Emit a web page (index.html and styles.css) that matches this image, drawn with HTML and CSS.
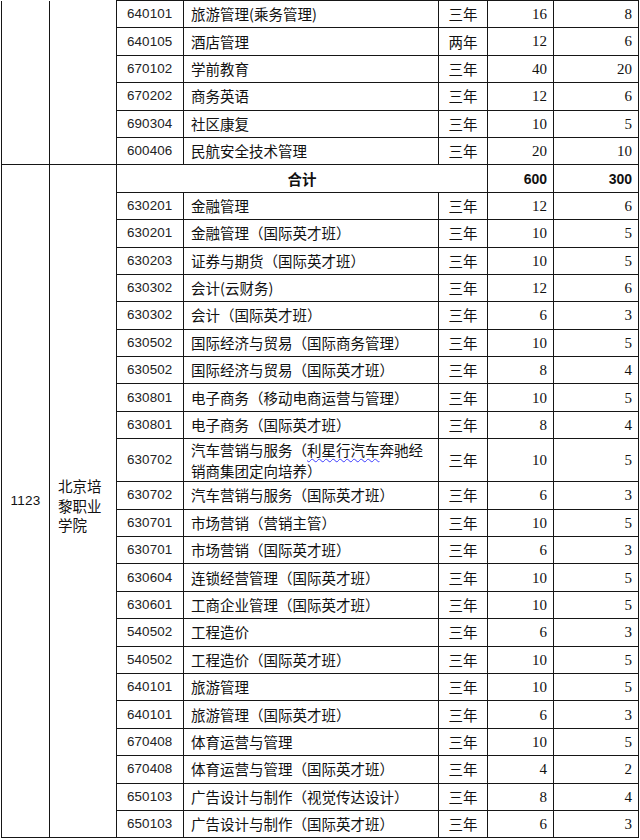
FILE: index.html
```html
<!DOCTYPE html>
<html lang="zh-CN">
<head>
<meta charset="utf-8">
<title>招生计划</title>
<link rel="stylesheet" href="styles.css">
</head>
<body>
<table class="plan">
  <colgroup>
    <col class="c-id"><col class="c-school"><col class="c-code"><col class="c-name"><col class="c-len"><col class="c-num"><col class="c-num2">
  </colgroup>
  <tbody>
    <tr>
      <td class="cont" rowspan="6"></td>
      <td class="cont" rowspan="6"></td>
      <td class="code">640101</td><td class="name">旅游管理(乘务管理)</td><td class="len">三年</td><td class="num hi">16</td><td class="num hi">8</td>
    </tr>
    <tr><td class="code">640105</td><td class="name">酒店管理</td><td class="len">两年</td><td class="num hi">12</td><td class="num hi">6</td></tr>
    <tr><td class="code">670102</td><td class="name">学前教育</td><td class="len">三年</td><td class="num hi">40</td><td class="num hi">20</td></tr>
    <tr><td class="code">670202</td><td class="name">商务英语</td><td class="len">三年</td><td class="num hi">12</td><td class="num hi">6</td></tr>
    <tr><td class="code">690304</td><td class="name">社区康复</td><td class="len">三年</td><td class="num hi">10</td><td class="num hi">5</td></tr>
    <tr><td class="code">600406</td><td class="name">民航安全技术管理</td><td class="len">三年</td><td class="num hi">20</td><td class="num hi">10</td></tr>

    <tr>
      <td class="id" rowspan="24">1123</td>
      <td class="school" rowspan="24">北京培黎职业学院</td>
      <td class="total-label" colspan="3">合计</td><td class="total">600</td><td class="total">300</td>
    </tr>
    <tr><td class="code">630201</td><td class="name">金融管理</td><td class="len">三年</td><td class="num">12</td><td class="num">6</td></tr>
    <tr><td class="code">630201</td><td class="name">金融管理（国际英才班）</td><td class="len">三年</td><td class="num">10</td><td class="num">5</td></tr>
    <tr><td class="code">630203</td><td class="name">证券与期货（国际英才班）</td><td class="len">三年</td><td class="num">10</td><td class="num">5</td></tr>
    <tr><td class="code">630302</td><td class="name">会计(云财务)</td><td class="len">三年</td><td class="num">12</td><td class="num">6</td></tr>
    <tr><td class="code">630302</td><td class="name">会计（国际英才班）</td><td class="len">三年</td><td class="num">6</td><td class="num">3</td></tr>
    <tr><td class="code">630502</td><td class="name">国际经济与贸易（国际商务管理）</td><td class="len">三年</td><td class="num">10</td><td class="num">5</td></tr>
    <tr><td class="code">630502</td><td class="name">国际经济与贸易（国际英才班）</td><td class="len">三年</td><td class="num">8</td><td class="num">4</td></tr>
    <tr><td class="code">630801</td><td class="name">电子商务（移动电商运营与管理）</td><td class="len">三年</td><td class="num">10</td><td class="num">5</td></tr>
    <tr><td class="code">630801</td><td class="name">电子商务（国际英才班）</td><td class="len">三年</td><td class="num">8</td><td class="num">4</td></tr>
    <tr class="tall"><td class="code">630702</td><td class="name wrap">汽车营销与服务（<span class="spell">利星行汽车</span>奔驰经<br>销商集团定向培养）</td><td class="len">三年</td><td class="num">10</td><td class="num">5</td></tr>
    <tr><td class="code">630702</td><td class="name">汽车营销与服务（国际英才班）</td><td class="len">三年</td><td class="num">6</td><td class="num">3</td></tr>
    <tr><td class="code">630701</td><td class="name">市场营销（营销主管）</td><td class="len">三年</td><td class="num">10</td><td class="num">5</td></tr>
    <tr><td class="code">630701</td><td class="name">市场营销（国际英才班）</td><td class="len">三年</td><td class="num">6</td><td class="num">3</td></tr>
    <tr><td class="code">630604</td><td class="name">连锁经营管理（国际英才班）</td><td class="len">三年</td><td class="num">10</td><td class="num">5</td></tr>
    <tr><td class="code">630601</td><td class="name">工商企业管理（国际英才班）</td><td class="len">三年</td><td class="num">10</td><td class="num">5</td></tr>
    <tr><td class="code">540502</td><td class="name">工程造价</td><td class="len">三年</td><td class="num">6</td><td class="num">3</td></tr>
    <tr><td class="code">540502</td><td class="name">工程造价（国际英才班）</td><td class="len">三年</td><td class="num">10</td><td class="num">5</td></tr>
    <tr><td class="code">640101</td><td class="name">旅游管理</td><td class="len">三年</td><td class="num">10</td><td class="num">5</td></tr>
    <tr><td class="code">640101</td><td class="name">旅游管理（国际英才班）</td><td class="len">三年</td><td class="num">6</td><td class="num">3</td></tr>
    <tr><td class="code">670408</td><td class="name">体育运营与管理</td><td class="len">三年</td><td class="num">10</td><td class="num">5</td></tr>
    <tr><td class="code">670408</td><td class="name">体育运营与管理（国际英才班）</td><td class="len">三年</td><td class="num">4</td><td class="num">2</td></tr>
    <tr><td class="code">650103</td><td class="name">广告设计与制作（视觉传达设计）</td><td class="len">三年</td><td class="num">8</td><td class="num">4</td></tr>
    <tr><td class="code">650103</td><td class="name">广告设计与制作（国际英才班）</td><td class="len">三年</td><td class="num">6</td><td class="num">3</td></tr>
  </tbody>
</table>
</body>
</html>
```

FILE: styles.css
```css
html, body {
  margin: 0;
  padding: 0;
  background: #ffffff;
}

body {
  padding-left: 1px;
  color: #111111;
  font-family: "Noto Sans CJK SC", "Liberation Sans", sans-serif;
  font-size: 14.5px;
}

.plan {
  border-collapse: collapse;
  table-layout: fixed;
  width: 637px;
}

.c-id { width: 48px; }
.c-school { width: 67px; }
.c-code { width: 67px; }
.c-name { width: 255px; }
.c-len { width: 49px; }
.c-num { width: 66px; }
.c-num2 { width: 85px; }

.plan tr {
  height: 27.4px;
}

.plan tr.tall {
  height: 42px;
}

.plan td {
  border: 1px solid #161616;
  padding: 0;
  vertical-align: middle;
  line-height: 18px;
  white-space: nowrap;
  overflow: hidden;
}

.plan td.cont {
  border-top: none;
}

.id {
  text-align: center;
  font-family: "Liberation Sans", "DejaVu Sans", sans-serif;
  font-size: 13.5px;
  font-weight: 400;
  letter-spacing: 0.2px;
}

.plan td.school {
  white-space: normal;
  padding: 8px 8px 0 8px;
  line-height: 19.5px;
  font-size: 14.5px;
}

.code {
  font-family: "Liberation Sans", "DejaVu Sans", sans-serif;
  font-size: 13.4px;
  padding-left: 10px !important;
  letter-spacing: 0.1px;
  color: #222222;
}

.name {
  padding-left: 7px !important;
  text-align: left;
}

.plan td.wrap {
  line-height: 21px;
}

.spell {
  text-decoration: underline wavy #3b3bff;
  text-decoration-thickness: 1px;
  text-underline-offset: 2px;
}

.len {
  text-align: center;
}

.num {
  text-align: right;
  padding-right: 6px !important;
  font-family: "Liberation Serif", "DejaVu Serif", serif;
  font-size: 15px;
}

.plan td.hi {
  vertical-align: top;
  padding-top: 4px;
}

.total-label {
  text-align: center;
  font-weight: 700;
}

.total {
  text-align: right;
  padding-right: 6px !important;
  font-family: "Liberation Sans", "DejaVu Sans", sans-serif;
  font-size: 14px;
  font-weight: 700;
}
```
